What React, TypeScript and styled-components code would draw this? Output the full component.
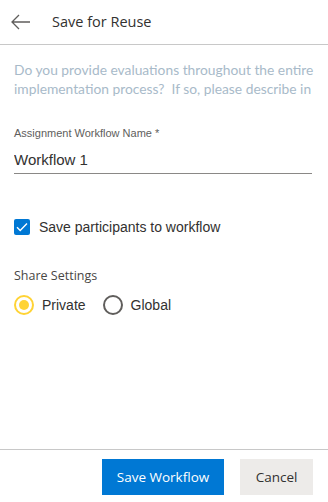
import styled, { createGlobalStyle } from 'styled-components'

const GlobalStyle = createGlobalStyle`
  html, body {
    margin: 0;
    padding: 0;
    background: #ffffff;
  }
  * {
    box-sizing: border-box;
  }
`

const Panel = styled.div`
  width: 328px;
  height: 502px;
  display: flex;
  flex-direction: column;
  background: #ffffff;
  font-family: "Open Sans", "Noto Sans", sans-serif;
`

const Header = styled.div`
  height: 45px;
  display: flex;
  align-items: center;
  padding: 0 0 0 10px;
  border-bottom: 1px solid #c8c8c8;
  flex-shrink: 0;
`

const BackButton = styled.button`
  width: 22px;
  height: 22px;
  padding: 0;
  border: none;
  background: transparent;
  display: flex;
  align-items: center;
  justify-content: center;
  margin-right: 20px;
`

const Title = styled.h1`
  margin: 0 0 1px 0;
  font-size: 14.5px;
  font-weight: 400;
  color: #323130;
`

const Body = styled.div`
  flex: 1;
  padding: 15px 14px 0 14px;
  display: flex;
  flex-direction: column;
`

const Description = styled.div`
  font-family: Lato, "Open Sans", sans-serif;
  font-size: 13.8px;
  line-height: 19px;
  color: #a8bac9;
`

const DescLine = styled.span`
  display: block;
  white-space: pre;
`

const Field = styled.div`
  margin-top: 28px;
  display: flex;
  flex-direction: column;
`

const Label = styled.label`
  font-family: "Liberation Sans", Arial, sans-serif;
  font-size: 11px;
  color: #605e5c;
  line-height: 14px;
`

const TextInput = styled.input`
  margin-top: 10px;
  height: 24px;
  padding: 0 0 4px 0;
  border: none;
  border-bottom: 1px solid #8a8886;
  font-family: "Liberation Sans", Arial, sans-serif;
  font-size: 15px;
  color: #323130;
  outline: none;
  width: 298px;
`

const CheckRow = styled.label`
  margin-top: 45px;
  display: flex;
  align-items: center;
  gap: 9px;
  font-family: "Liberation Sans", Arial, sans-serif;
  font-size: 14px;
  color: #323130;
`

const CheckBox = styled.span`
  width: 16px;
  height: 16px;
  border-radius: 2px;
  background: #0078d4;
  display: flex;
  align-items: center;
  justify-content: center;
`

const GroupLabel = styled.div`
  margin-top: 32px;
  font-size: 12.5px;
  color: #484644;
`

const RadioGroup = styled.div`
  margin-top: 11px;
  display: flex;
  align-items: center;
  gap: 17px;
`

const RadioOption = styled.label`
  display: flex;
  align-items: center;
  gap: 8px;
  font-family: "Liberation Sans", Arial, sans-serif;
  font-size: 14px;
  color: #323130;
`

const RadioCircle = styled.span<{ $checked?: boolean }>`
  width: 20px;
  height: 20px;
  border-radius: 50%;
  border: 2px solid ${p => (p.$checked ? '#ffd335' : '#605e5c')};
  display: flex;
  align-items: center;
  justify-content: center;
  &::after {
    content: '';
    width: 10px;
    height: 10px;
    border-radius: 50%;
    background: ${p => (p.$checked ? '#ffd335' : 'transparent')};
  }
`

const Footer = styled.div`
  height: 53px;
  border-top: 1px solid #c8c8c8;
  display: flex;
  align-items: flex-start;
  justify-content: flex-end;
  gap: 16px;
  padding: 9px 15px 0 0;
  flex-shrink: 0;
`

const Button = styled.button<{ $primary?: boolean }>`
  height: 36px;
  padding: 0 12px;
  border: none;
  border-radius: 0;
  font-family: "Open Sans", "Noto Sans", sans-serif;
  font-size: 13.5px;
  background: ${p => (p.$primary ? '#0078d4' : '#edebe9')};
  color: ${p => (p.$primary ? '#ffffff' : '#323130')};
  width: ${p => (p.$primary ? '122px' : '73px')};
`

function App() {
  return (
    <>
      <GlobalStyle />
      <Panel>
        <Header>
          <BackButton aria-label="Back">
            <svg width="20" height="16" viewBox="0 0 20 16" fill="none">
              <path d="M1 8 H19 M8 1 L1 8 L8 15" stroke="#605e5c" strokeWidth="1.3" />
            </svg>
          </BackButton>
          <Title>Save for Reuse</Title>
        </Header>
        <Body>
          <Description>
            <DescLine>Do you provide evaluations throughout the entire</DescLine>
            <DescLine>implementation process?  If so, please describe in</DescLine>
          </Description>
          <Field>
            <Label>Assignment Workflow Name *</Label>
            <TextInput defaultValue="Workflow 1" />
          </Field>
          <CheckRow>
            <CheckBox>
              <svg width="12" height="10" viewBox="0 0 12 10" fill="none">
                <path d="M1 5.2 L4.2 8.4 L11 1.6" stroke="#ffffff" strokeWidth="1.4" />
              </svg>
            </CheckBox>
            Save participants to workflow
          </CheckRow>
          <GroupLabel>Share Settings</GroupLabel>
          <RadioGroup>
            <RadioOption>
              <RadioCircle $checked />
              Private
            </RadioOption>
            <RadioOption>
              <RadioCircle />
              Global
            </RadioOption>
          </RadioGroup>
        </Body>
        <Footer>
          <Button $primary>Save Workflow</Button>
          <Button>Cancel</Button>
        </Footer>
      </Panel>
    </>
  )
}

export default App
